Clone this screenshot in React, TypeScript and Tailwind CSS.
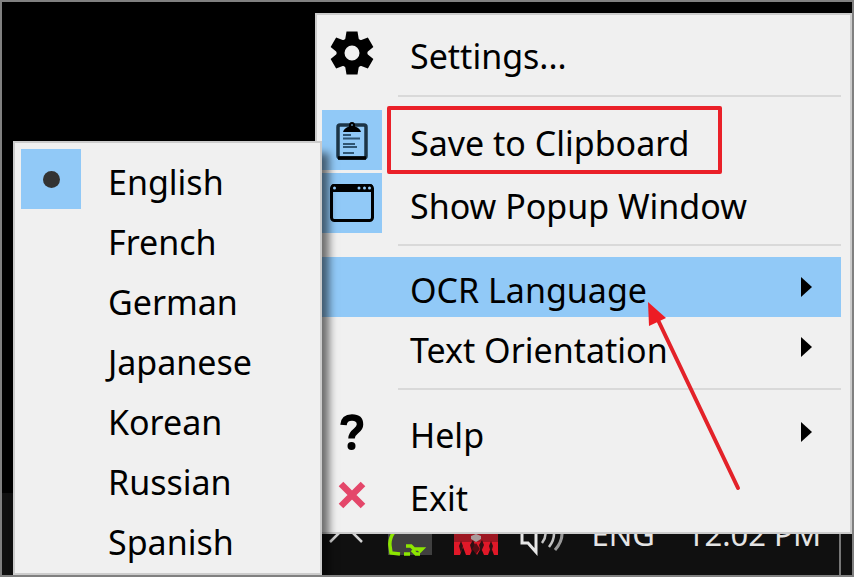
import { useState, type ReactNode } from "react";

const languages = ["English", "French", "German", "Japanese", "Korean", "Russian", "Spanish"];

function GearIcon() {
  return (
    <svg className="w-11 h-11" viewBox="0 0 44 44" aria-hidden="true">
      <g transform="translate(22 22)">
        {[0, 60, 120].map((angle) => (
          <path key={angle} d="M-5.5-21.5h11l1.5 9h-14zM-5.5 21.5h11l1.5-9h-14z" transform={`rotate(${angle})`} />
        ))}
        <circle r="11.5" fill="none" stroke="#000" strokeWidth="8" />
      </g>
    </svg>
  );
}

function ClipboardIcon() {
  return (
    <svg className="w-8 h-10" viewBox="0 0 32 40" aria-hidden="true">
      <rect x="2" y="5" width="28" height="33" rx="2" fill="none" stroke="#1c3446" strokeWidth="3.5" />
      <path d="M7 12q1-4 6-5.500Q12.500 2 16 2t3 4.500q5 1.500 6 5.500z" fill="#000" />
      <circle cx="16" cy="5" r="1" fill="#5f8bad" />
      <path d="M7 15h8M7 18.500h17M7 24h12M7 27h14M7 33h11" stroke="#2f5573" strokeWidth="2" />
      <path d="M2 38h28" stroke="#000" strokeWidth="3.5" />
    </svg>
  );
}

function WindowIcon() {
  return (
    <svg className="w-11 h-10" viewBox="0 0 44 40" aria-hidden="true">
      <rect x="1.5" y="2.5" width="41" height="35" rx="3" fill="none" stroke="#000" strokeWidth="3" />
      <path d="M1 9V4q0-3 3-3h36q3 0 3 3v5z" fill="#000" />
      <g fill="#91c9f7">
        <circle cx="4.5" cy="5" r="1.5" />
        <circle cx="29" cy="5" r="1.5" />
        <circle cx="34.5" cy="5" r="1.5" />
        <circle cx="39.5" cy="5" r="1.5" />
      </g>
    </svg>
  );
}

function HelpIcon() {
  return (
    <svg className="w-6 h-9" viewBox="0 0 24 36" aria-hidden="true">
      <path d="M3.5 11Q4 3.500 12 3.500t8 7c0 7-8.500 6-8.500 14" fill="none" stroke="#000" strokeWidth="6.5" />
      <circle cx="11.5" cy="32" r="4" />
    </svg>
  );
}

function ExitIcon() {
  return (
    <svg className="w-7 h-7" viewBox="0 0 28 28" aria-hidden="true">
      <path d="M3 3l22 22M25 3L3 25" stroke="#e4476a" strokeWidth="6.5" />
    </svg>
  );
}

function MenuButton({ icon, submenu, active, children }: { icon?: ReactNode; submenu?: boolean; active?: boolean; children: ReactNode }) {
  return (
    <button type="button" className={`flex h-[60px] w-full items-center gap-7 pr-7 text-left ${active ? "bg-[#91c9f7]" : ""}`}>
      <span className="flex w-[60px] shrink-0 justify-center">{icon}</span>
      <span className="grow pt-1.5">{children}</span>
      {submenu && (
        <svg className="w-3 h-5" viewBox="0 0 12 20" aria-hidden="true">
          <path d="M0 0l11 10L0 20z" />
        </svg>
      )}
    </button>
  );
}

function MenuCheck({ icon, highlighted, children }: { icon: ReactNode; highlighted?: boolean; children: ReactNode }) {
  return (
    <label className="relative flex h-[60px] items-center gap-7">
      <span className="grid shrink-0">
        <input type="checkbox" defaultChecked className="col-start-1 row-start-1 size-[60px] appearance-none checked:bg-[#91c9f7]" />
        <span className="pointer-events-none z-10 col-start-1 row-start-1 place-self-center">{icon}</span>
      </span>
      <span className="pt-1.5">{children}</span>
      {highlighted && <span className="absolute -top-1 left-[65px] h-[68px] w-[335px] rounded-xs border-4 border-[#ea2029]" />}
    </label>
  );
}

function Separator() {
  return (
    <div className="flex h-6 items-center pl-[76px]">
      <hr className="grow border-t-2 border-[#d9d9d9]" />
    </div>
  );
}

function LanguageMenu() {
  const [language, setLanguage] = useState("English");

  return (
    <fieldset className="absolute right-[530px] bottom-0 w-[309px] border-2 border-[#cccccc] bg-[#f0f0f0] px-1.5 py-1 pt-1.5 shadow-[7px_12px_8px_rgba(0,0,0,0.55)]">
      {languages.map((name) => (
        <label key={name} className="flex h-[60px] items-center gap-[27px]">
          <input
            type="radio"
            name="language"
            checked={language === name}
            onChange={() => setLanguage(name)}
            className="grid size-[60px] shrink-0 appearance-none place-items-center before:size-[17px] before:rounded-full checked:bg-[#91c9f7] checked:before:bg-[#333333]"
          />
          <span className="pt-1.5">{name}</span>
        </label>
      ))}
    </fieldset>
  );
}

function Taskbar() {
  return (
    <footer className="flex h-[82px] items-center justify-end bg-[#101010] pr-[11px] text-[31px] text-[#e4e4e4]">
      <svg className="mr-6 h-11 w-9" viewBox="0 0 36 44" aria-hidden="true">
        <path d="M2 30L18 14l16 16" fill="none" stroke="#d4d4d4" strokeWidth="2.5" />
      </svg>
      <svg className="mr-[22px] size-11" viewBox="0 0 44 44" aria-hidden="true">
        <path d="M0 0h44v43H0z" fill="#404040" />
        <path d="M6 20q-5 7-4 14l1 7 9 1" fill="none" stroke="#8ce600" strokeWidth="3.5" />
        <path d="M16 42h6M18 34h5l3 3h8l-3 3M24 38l4 4h4" fill="none" stroke="#8ce600" strokeWidth="3.5" />
      </svg>
      <svg className="mr-[22px] size-11" viewBox="0 0 44 44" aria-hidden="true">
        <path d="M0 0h44v30H0z" fill="#9d1722" />
        <path d="M0 30h44v13h-4l-3-8-3 8h-4l-3-7-4 7-4-7-3 7h-4l-3-8-3 8H0z" fill="#e01828" />
        <path d="M5 34l2-5 2 5-2 7zM35 34l2-5 2 5-2 7zM16 33l3-5 2 5-3 7zM25 33l3-5 2 5-3 7z" fill="#301014" />
        <path d="M22 31l4 6-4 5-4-5z" fill="#550d14" />
        <path d="M17 24l5-2 5 2v3l-5 3-5-3z" fill="#a99b9b" />
      </svg>
      <svg className="mr-[27px] size-11" viewBox="0 0 44 44" aria-hidden="true">
        <path d="M2 14h6l8-10v36l-8-9H2z" fill="none" stroke="#e6e6e6" strokeWidth="3" />
        <path d="M22 31q7-9 0-18M29 35q10-13 0-26" fill="none" stroke="#c4c4c4" strokeWidth="2.5" />
        <path d="M35 38q14-16 0-32" fill="none" stroke="#999999" strokeWidth="3" />
      </svg>
      <span className="mr-8">ENG</span>
      <time className="mr-[18px]">12:02 PM</time>
      <span className="h-full w-0.5 bg-[#777777]" />
    </footer>
  );
}

export default function App() {
  return (
    <div className="relative flex min-h-screen flex-col justify-end overflow-hidden border-2 border-[#808080] bg-black font-['Noto_Sans',sans-serif] text-[34px] leading-10 text-black">
      <Taskbar />

      <nav className="absolute top-[11px] right-0 w-[537px] border-2 border-[#cccccc] bg-[#f0f0f0] pt-[7px] pr-[9px] pb-1.5 pl-[5px]">
        <div className="py-px">
          <MenuButton icon={<GearIcon />}>Settings...</MenuButton>
        </div>
        <Separator />
        <div className="flex flex-col gap-[3px] pt-0.5">
          <MenuCheck icon={<ClipboardIcon />} highlighted>Save to Clipboard</MenuCheck>
          <MenuCheck icon={<WindowIcon />}>Show Popup Window</MenuCheck>
        </div>
        <Separator />
        <MenuButton submenu active>OCR Language</MenuButton>
        <MenuButton submenu>Text Orientation</MenuButton>
        <Separator />
        <div className="flex flex-col gap-[3px] py-px">
          <MenuButton icon={<HelpIcon />} submenu>Help</MenuButton>
          <MenuButton icon={<ExitIcon />}>Exit</MenuButton>
        </div>

        {/* Pointer to the language entry */}
        <svg className="pointer-events-none absolute top-[285px] right-[106px] h-[195px] w-[100px]" viewBox="0 0 100 195" aria-hidden="true">
          <path d="M14 20l80 168" stroke="#e32229" strokeWidth="4" strokeLinecap="round" />
          <path d="M4 2l18 16-17 8z" fill="#ed1c24" />
        </svg>
      </nav>

      <LanguageMenu />
    </div>
  );
}
